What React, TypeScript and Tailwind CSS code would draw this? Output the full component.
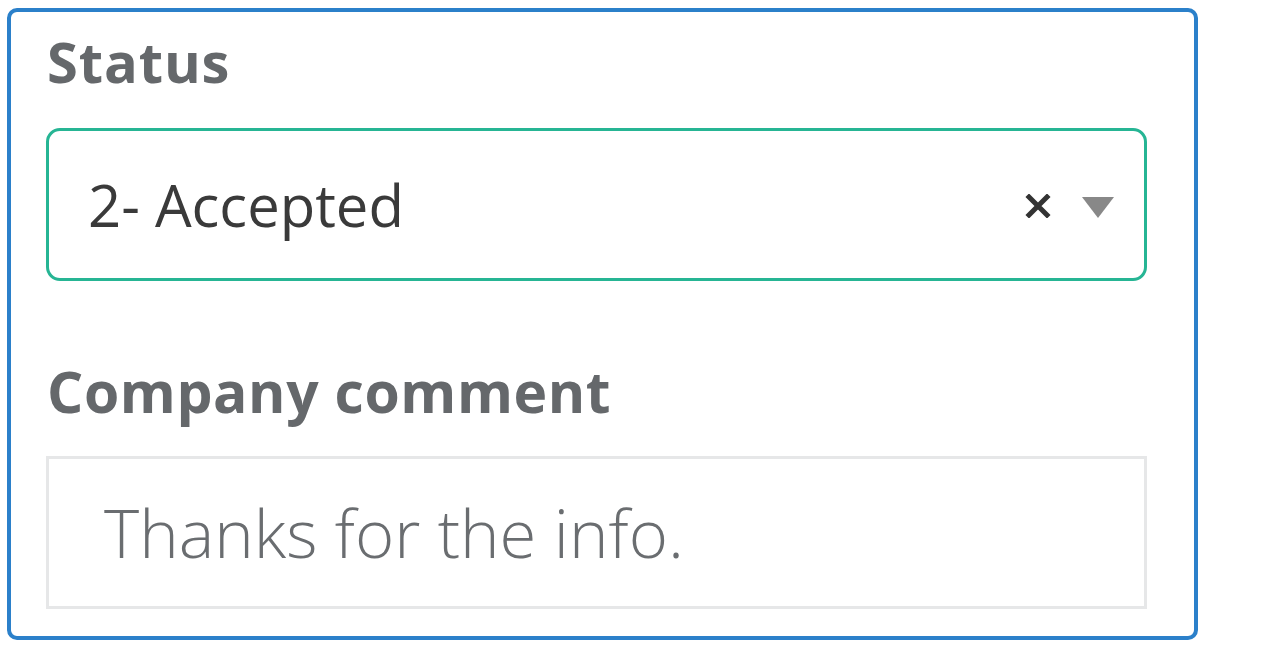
import React from "react";

export default function App() {
  return (
    <div className="w-[1286px] h-[656px] bg-white relative" style={{ fontFamily: '"Open Sans", "Noto Sans", sans-serif' }}>
      <div className="absolute left-[7px] top-[8px] w-[1191px] h-[632px] border-4 border-[#2b80ca] rounded-[10px] pl-[35px] pt-[7px]">
        <div className="w-[1101px] flex flex-col">
          <div className="text-[56px] font-bold leading-[84px] text-[#65686b] tracking-[0.9px] pl-[1px]">Status</div>
          <div className="mt-[25px] h-[153px] border-[3px] border-[#26b594] rounded-[14px] flex items-center pl-[39px] pr-[30px]">
            <span className="flex-1 text-[58px] leading-none text-[#3a3a3a]">2- Accepted</span>
            <svg width="26" height="24" viewBox="0 0 26 24" className="mr-[31px] mt-[2px]">
              <path d="M4 3 L22 21 M22 3 L4 21" stroke="#333" strokeWidth="5" strokeLinecap="square" />
            </svg>
            <svg width="32" height="21" viewBox="0 0 32 21" className="mt-[6px]">
              <path d="M0 0 H32 L16 21 Z" fill="#888" />
            </svg>
          </div>
          <div className="mt-[68px] text-[57px] font-bold leading-[84px] text-[#65686b] tracking-[0.6px] pl-[1px]">Company comment</div>
          <div className="mt-[23px] h-[153px] border-[3px] border-[#e6e7e8] flex items-center pl-[55px]">
            <span className="text-[67px] font-light leading-none text-[#6a6d70]">Thanks for the info.</span>
          </div>
        </div>
      </div>
    </div>
  );
}
